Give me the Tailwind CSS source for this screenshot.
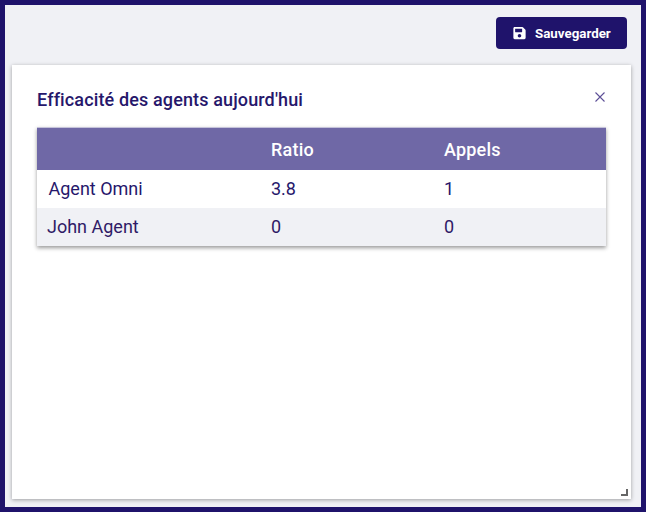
<!DOCTYPE html>
<html>
<head>
<meta charset="utf-8">
<script src="https://cdn.jsdelivr.net/npm/@tailwindcss/browser@4"></script>
</head>
<body class="m-0">
<div class="w-[646px] h-[512px] border-[5px] border-[#1f136b] bg-[#f0f1f5] font-['Roboto',sans-serif] flex flex-col overflow-hidden">
  <div class="flex justify-end pt-[12px] pr-[14px]">
    <button class="w-[131px] h-[32px] rounded-[4px] bg-[#1f136b] text-white flex items-center pl-[17px] text-[13.33px] font-bold">
      <svg class="w-[13px] h-[14px] mr-[9px]" viewBox="0 0 448 512" fill="currentColor"><path d="M433.9 129.9l-83.9-83.9A48 48 0 0 0 316.1 32H48C21.5 32 0 53.5 0 80v352c0 26.5 21.5 48 48 48h352c26.500 0 48-21.500 48-48V163.900a48 48 0 0 0-14.100-34zM224 416c-35.300 0-64-28.700-64-64 0-35.300 28.700-64 64-64s64 28.700 64 64c0 35.300-28.700 64-64 64zm96-304.500V212c0 6.600-5.400 12-12 12H76c-6.600 0-12-5.400-12-12V108c0-6.600 5.400-12 12-12h228.500c3.200 0 6.200 1.300 8.500 3.500l3.500 3.500c2.200 2.200 3.500 5.300 3.500 8.500z"/></svg>
      <span class="relative top-[0.5px]">Sauvegarder</span>
    </button>
  </div>
  <div class="relative mt-[16px] ml-[7px] w-[619px] h-[434px] bg-white shadow-[0_1px_4px_rgba(0,0,0,0.35)] pt-[23px] px-[25px]">
    <div class="flex justify-between items-start">
      <h2 class="text-[18px] leading-[24px] tracking-[0.13px] font-medium text-[#26176b]">Efficacité des agents aujourd'hui</h2>
      <svg class="w-[10px] h-[10px] mt-[4px] mr-[1px]" viewBox="0 0 10 10" stroke="#5d4f97" stroke-width="1.1" fill="none"><path d="M0.500 0.500L9.500 9.500M9.500 0.500L0.500 9.500"/></svg>
    </div>
    <div class="mt-[15px] w-[569px] shadow-[0_2px_4px_rgba(0,0,0,0.4)] text-[18px]">
      <div class="grid grid-cols-[234px_173px_1fr] h-[43px] items-center bg-[#6f68a6] border-t border-[#c5c3da] text-white font-medium">
        <div></div>
        <div class="tracking-[0.2px]">Ratio</div>
        <div class="tracking-[0.2px]">Appels</div>
      </div>
      <div class="grid grid-cols-[234px_173px_1fr] h-[38px] items-center bg-white text-[#26176b]">
        <div class="pl-[11.5px] -mt-[1px]">Agent Omni</div>
        <div class="-mt-[1px]">3.8</div>
        <div class="-mt-[1px]">1</div>
      </div>
      <div class="grid grid-cols-[234px_173px_1fr] h-[38px] items-center bg-[#f0f1f5] text-[#2f1a66]">
        <div class="pl-[10px] -mt-[1px]">John Agent</div>
        <div class="-mt-[1px]">0</div>
        <div class="-mt-[1px]">0</div>
      </div>
    </div>
    <div class="absolute right-[3px] bottom-[3px] w-[7px] h-[7px] border-r-[2px] border-b-[2px] border-[#666]"></div>
  </div>
</div>
</body>
</html>
